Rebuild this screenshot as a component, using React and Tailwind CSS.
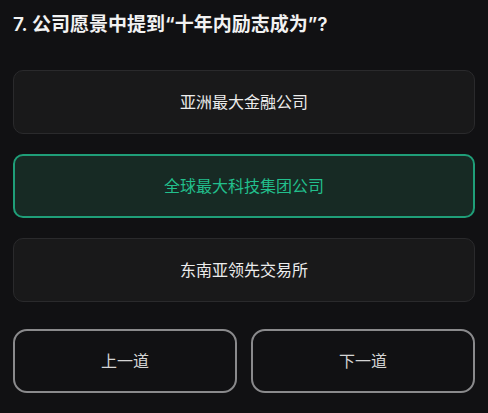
export default function App() {
  const font = { fontFamily: 'Inter, "Noto Sans CJK SC", sans-serif' };
  return (
    <div className="w-[488px] h-[413px] bg-[#111113] px-[13px] pt-[12px]" style={font}>
      <div className="text-[19px] leading-[25px] font-semibold text-[#f2f2f2]">7. 公司愿景中提到“十年内励志成为”?</div>
      <div className="mt-[33px] flex flex-col gap-[20px]">
        <div className="h-[64px] rounded-[10px] border border-[#2a2a2c] bg-[#19191a] flex items-center justify-center text-[16px] text-[#ececec]">亚洲最大金融公司</div>
        <div className="h-[64px] rounded-[10px] border-2 border-[#1f9e78] bg-[#172a24] flex items-center justify-center text-[16px] text-[#22bf8c]">全球最大科技集团公司</div>
        <div className="h-[64px] rounded-[10px] border border-[#2a2a2c] bg-[#19191a] flex items-center justify-center text-[16px] text-[#ececec]">东南亚领先交易所</div>
      </div>
      <div className="mt-[27px] flex gap-[14px]">
        <div className="flex-1 h-[64px] rounded-[14px] border-2 border-[#8a8a8c] flex items-center justify-center text-[16px] text-[#d4d4d4]">上一道</div>
        <div className="flex-1 h-[64px] rounded-[14px] border-2 border-[#8a8a8c] flex items-center justify-center text-[16px] text-[#d4d4d4]">下一道</div>
      </div>
    </div>
  );
}
